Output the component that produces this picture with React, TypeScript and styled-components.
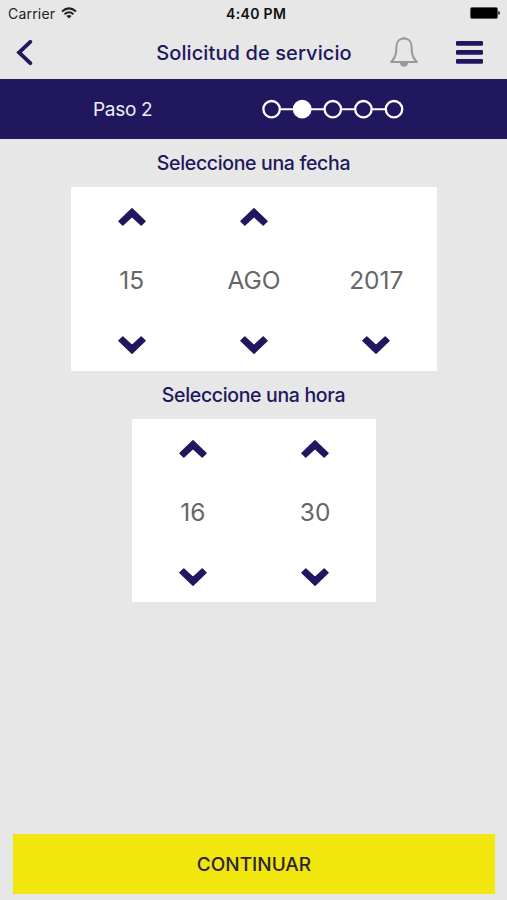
import React from "react";
import styled, { createGlobalStyle } from "styled-components";

const NAVY = "#20175f";

const GlobalStyle = createGlobalStyle`
  * { box-sizing: border-box; }
  body { margin: 0; background: #e7e7e7; }
`;

const Screen = styled.div`
  width: 507px;
  height: 900px;
  display: flex;
  flex-direction: column;
  align-items: center;
  background: #e7e7e7;
  color: ${NAVY};
  font-family: Inter, "Liberation Sans", sans-serif;
  overflow: hidden;
`;

const StatusBar = styled.div`
  width: 100%;
  height: 27px;
  padding: 0 7px 1px 8px;
  display: grid;
  grid-template-columns: 218px auto 1fr;
  align-items: center;
  color: #222;
  flex: none;
`;

const Carrier = styled.div`
  display: flex;
  align-items: center;
  gap: 6px;
  font-size: 14px;
  letter-spacing: 0.2px;
  svg { display: block; margin-top: -1px; }
`;

const Clock = styled.div`
  font-size: 14px;
  font-weight: 600;
  letter-spacing: 0.35px;
  color: #111;
`;

const Battery = styled.svg`
  display: block;
  justify-self: end;
`;

const Header = styled.header`
  width: 100%;
  height: 52px;
  padding: 0 24px 0 16px;
  display: grid;
  grid-template-columns: 60px 356px auto;
  align-items: center;
  flex: none;
`;

const BackButton = styled.button`
  border: 0;
  padding: 0;
  background: none;
  justify-self: start;
  svg { display: block; }
`;

const Title = styled.h1`
  margin: -1px 0 0;
  text-align: center;
  font-size: 20px;
  line-height: 24px;
  font-weight: 550;
  letter-spacing: 0.1px;
`;

const Actions = styled.div`
  display: flex;
  align-items: center;
  gap: 38px;
  margin-left: -42px;
  margin-top: -2px;
  svg { display: block; }
`;

const StepBar = styled.div`
  width: 100%;
  height: 60px;
  padding: 0 103px 0 93px;
  display: flex;
  align-items: center;
  justify-content: space-between;
  background: ${NAVY};
  color: #f0eff6;
  font-size: 19px;
  flex: none;
  svg { display: block; }
`;

const StepName = styled.span`
  letter-spacing: -0.3px;
`;

const Label = styled.h2`
  margin: 0;
  height: 48px;
  line-height: 49px;
  font-size: 19.5px;
  font-weight: 500;
  letter-spacing: -0.34px;
  flex: none;
`;

const Panel = styled.div<{ $cols: number }>`
  display: grid;
  grid-template-columns: repeat(${(p) => p.$cols}, 1fr);
  width: ${(p) => p.$cols * 122.3}px;
  height: 183.3px;
  margin: 0.4px 0 0 1px;
  background: #fff;
  flex: none;
`;

const Column = styled.div`
  display: grid;
  grid-template-rows: 60px 1fr 50.5px;
  justify-items: center;
  align-items: center;
`;

const Value = styled.span`
  grid-row: 2;
  font-size: 24.5px;
  line-height: 30px;
  color: #666;
  margin-top: -7px;
`;

const Arrow = styled.button<{ $down?: boolean }>`
  grid-row: ${(p) => (p.$down ? 3 : 1)};
  border: 0;
  padding: 0;
  background: none;
  svg {
    display: block;
    transform: ${(p) => (p.$down ? "rotate(180deg)" : "none")};
  }
`;

const Continue = styled.button`
  width: 482px;
  height: 60px;
  margin: auto 0 6px;
  border: 0;
  padding: 1px 0 0 1px;
  background: #f2e60f;
  color: #2b2333;
  font: 500 19px/59px Inter, "Liberation Sans", sans-serif;
`;

const Chevron = () => (
  <svg width="28" height="18" viewBox="0 0 28 18">
    <path
      d="M14 0.900 L27 13.300 L23.200 17 L14 8.500 L4.800 17 L1 13.300 Z"
      fill={NAVY}
      stroke={NAVY}
      strokeWidth="1.500"
      strokeLinejoin="round"
    />
  </svg>
);

const Picker = ({ items }: { items: { value: string; up?: boolean }[] }) => (
  <Panel $cols={items.length}>
    {items.map(({ value, up = true }) => (
      <Column key={value}>
        {up && <Arrow aria-label="Subir"><Chevron /></Arrow>}
        <Value>{value}</Value>
        <Arrow $down aria-label="Bajar"><Chevron /></Arrow>
      </Column>
    ))}
  </Panel>
);

const Steps = ({ count, active }: { count: number; active: number }) => (
  <svg width="142" height="20" viewBox="0 0 142 20">
    <path d="M10 10.300H132" stroke="#fff" strokeWidth="2" />
    {Array.from({ length: count }, (_, i) => (
      <circle
        key={i}
        cx={9.6 + i * 30.6}
        cy="10.2"
        r="8.2"
        fill={i === active ? "#fff" : NAVY}
        stroke="#fff"
        strokeWidth="2.3"
      />
    ))}
  </svg>
);

export default function App() {
  return (
    <Screen>
      <GlobalStyle />
      <StatusBar>
        <Carrier>
          Carrier
          <svg width="16" height="12" viewBox="0 0 16 12" fill="none" stroke="#222" strokeWidth="2">
            <path d="M1 4.500 Q8 -1.700 15 4.500M3.500 7.200 Q8 3.300 12.500 7.200" />
            <path d="M5.400 9 Q8 6.900 10.600 9 L8 11.600Z" fill="#222" stroke="none" />
          </svg>
        </Carrier>
        <Clock>4:40 PM</Clock>
        <Battery width="30" height="12" viewBox="0 0 30 12">
          <rect x="0.500" y="0.500" width="27" height="11" rx="1.500" fill="#000" stroke="#555" strokeWidth="0.800" />
          <path d="M28.300 4 Q30 4.300 30 6 T28.300 8Z" fill="#111" />
        </Battery>
      </StatusBar>
      <Header>
        <BackButton aria-label="Atrás">
          <svg width="17" height="26" viewBox="0 0 17 26" fill="none" stroke={NAVY} strokeWidth="3.800">
            <path d="M14.300 1.800 L3 12.500 L14.300 23.200" strokeLinecap="round" />
          </svg>
        </BackButton>
        <Title>Solicitud de servicio</Title>
        <Actions>
          <svg width="28" height="32" viewBox="0 0 28 32" fill="none" stroke="#989898" strokeWidth="2">
            <path d="M14 2.600 C8.600 2.600 6.400 6.600 6.400 11 C6.400 18.500 5.200 21.500 1.200 26 H26.800 C22.800 21.500 21.600 18.500 21.600 11 C21.600 6.600 19.400 2.600 14 2.600Z" strokeLinejoin="round" />
            <path d="M12.600 2.600 Q12.600 0.800 14 0.800 T15.400 2.600Z" fill="#989898" stroke="none" />
            <path d="M9.800 26.500 H18.200 Q17.600 30.800 14 30.800 T9.800 26.500Z" fill="#989898" stroke="none" />
          </svg>
          <svg width="27" height="23" viewBox="0 0 27 23" fill={NAVY}>
            <rect width="27" height="4.800" rx="1.300" />
            <rect y="9" width="27" height="4.800" rx="1.300" />
            <rect y="18" width="27" height="4.800" rx="1.300" />
          </svg>
        </Actions>
      </Header>
      <StepBar>
        <StepName>Paso 2</StepName>
        <Steps count={5} active={1} />
      </StepBar>
      <Label>Seleccione una fecha</Label>
      <Picker items={[{ value: "15" }, { value: "AGO" }, { value: "2017", up: false }]} />
      <Label>Seleccione una hora</Label>
      <Picker items={[{ value: "16" }, { value: "30" }]} />
      <Continue>CONTINUAR</Continue>
    </Screen>
  );
}
